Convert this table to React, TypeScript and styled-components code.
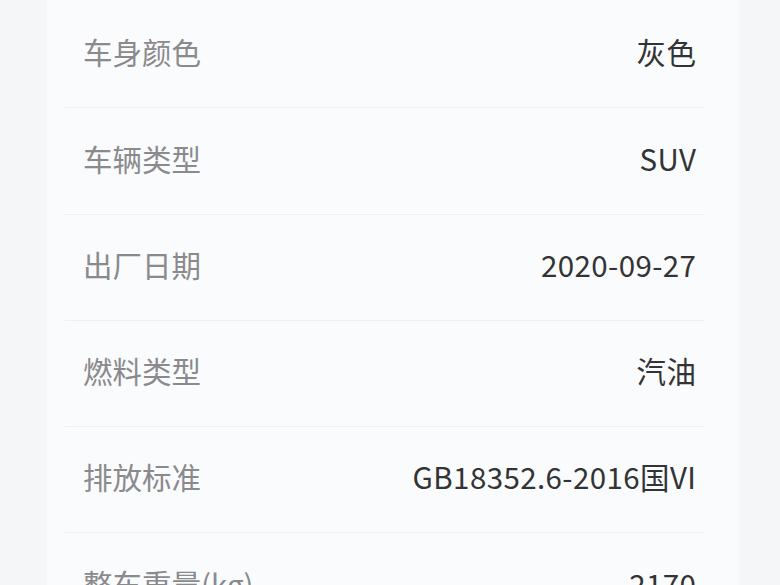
import React from 'react';
import styled, { createGlobalStyle } from 'styled-components';

const GlobalStyle = createGlobalStyle`
  html, body {
    margin: 0;
    padding: 0;
    background: #f5f6f8;
    overflow: hidden;
  }
`;

const Page = styled.div`
  box-sizing: border-box;
  height: 585px;
  padding: 2px 41px 0 47px;
  background: #f5f6f8;
  font-family: "Noto Sans CJK SC", "Noto Sans", sans-serif;
`;

const Card = styled.div`
  background: #fafbfc;
  margin-top: -2px;
  padding-top: 2px;
  height: 100%;
  display: flex;
  flex-direction: column;
`;

const Row = styled.div`
  box-sizing: border-box;
  flex: 0 0 106.25px;
  margin: 0 34px 0 18px;
  padding: 0 9px 5px 18px;
  display: flex;
  align-items: center;
  justify-content: space-between;
  border-bottom: 1px solid #eeeff1;
  font-size: 29.5px;
  line-height: 1;
`;

const Label = styled.span`
  color: #8a8a8c;
`;

const Value = styled.span`
  color: #333335;
  letter-spacing: 0.4px;
  margin-right: -0.4px;
`;

const specs: [string, string][] = [
  ['车身颜色', '灰色'],
  ['车辆类型', 'SUV'],
  ['出厂日期', '2020-09-27'],
  ['燃料类型', '汽油'],
  ['排放标准', 'GB18352.6-2016国VI'],
  ['整车重量(kg)', '2170'],
];

export default function App() {
  return (
    <>
      <GlobalStyle />
      <Page>
        <Card>
          {specs.map(([label, value]) => (
            <Row key={label}>
              <Label>{label}</Label>
              <Value>{value}</Value>
            </Row>
          ))}
        </Card>
      </Page>
    </>
  );
}
